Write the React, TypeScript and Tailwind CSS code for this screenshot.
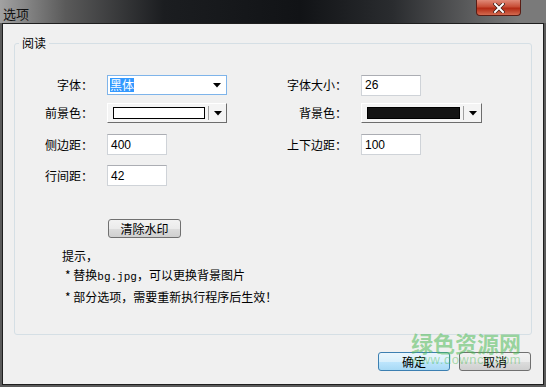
import React from 'react';

const font = "font-['SimSun','Noto_Sans_CJK_SC',sans-serif]";

function Caret() {
    return (
        <svg width="8" height="5" viewBox="0 0 8 5" className="block">
            <path d="M0 0h8L4 4.5z" fill="#000" />
        </svg>
    );
}

function TextBox({ value }: { value: string }) {
    return (
        <div className="w-[60px] h-[21px] bg-white border border-[#cfd3d8] border-t-[#abadb3] px-[3px] flex items-center text-[12px] font-['Liberation_Sans',sans-serif] text-black">
            {value}
        </div>
    );
}

function ColorCombo({ color, width }: { color: string; width: string }) {
    return (
        <div className={`${width} h-[20px] bg-[#f4f4f4] border border-[#fff] border-r-[#6d6d6d] border-b-[#6d6d6d] flex items-center pl-[5px]`}>
            <div className="flex-1 h-[12px] border border-black" style={{ background: color }} />
            <div className="ml-[3px] w-px h-[14px] bg-[#a0a0a0]" />
            <div className="w-[17px] flex justify-center">
                <Caret />
            </div>
        </div>
    );
}

function Label({ text, w }: { text: string; w: string }) {
    return <div className={`${w} flex justify-end whitespace-nowrap text-[12px] pr-[14px]`}>{text}</div>;
}

export default function App() {
    return (
        <div className={`w-[546px] h-[387px] bg-[#5b5b5b] flex flex-col ${font} text-black overflow-hidden`}>
            <div className="h-[23px] flex items-start justify-between bg-[linear-gradient(90deg,#a2a2a2_0%,#5a5a5a_12%,#1b1d20_30%,#111316_55%,#2a2c2f_72%,#7a7a7a_95%)]">
                <div className="pl-[3px] pt-[4px] text-[13px] text-[#111]">选项</div>
                <div className="mr-[25px] w-[45px] h-[16px] rounded-b-[4px] border border-[#5a1d15] border-t-0 bg-[linear-gradient(180deg,#e08a78_0%,#c74d36_45%,#b32a14_55%,#d36a50_100%)] flex items-center justify-center">
                    <svg width="12" height="10" viewBox="0 0 12 10">
                        <path d="M2 1l8 8M10 1L2 9" stroke="#3a1a14" strokeWidth="3.4" strokeLinecap="square" />
                        <path d="M2 1l8 8M10 1L2 9" stroke="#fff" strokeWidth="2" strokeLinecap="square" />
                    </svg>
                </div>
            </div>
            <div className="flex-1 mx-[2px] mb-[2px] border border-[#1e1e1e] bg-[#f0f0f0] flex flex-col">
                <div className="relative mt-[19px] mx-[11px] h-[292px] border border-[#d5dfe5] rounded-[3px]">
                    <div className="absolute -top-[9px] left-[4px] px-[3px] bg-[#f0f0f0] text-[12px] leading-[16px]">阅读</div>
                    <div className="flex pt-[31px]">
                        <div className="flex flex-col gap-[11px] w-[276px]">
                            <div className="flex items-center h-[20px]">
                                <Label text="字体：" w="w-[92px]" />
                                <div className="w-[120px] h-[20px] bg-white border border-[#7eb4ea] flex items-center justify-between pl-[2px] pr-[5px]">
                                    <span className="bg-[#3399ff] text-white text-[12px] leading-[14px]">黑体</span>
                                    <Caret />
                                </div>
                            </div>
                            <div className="flex items-center h-[20px] -mt-[3px]">
                                <Label text="前景色：" w="w-[92px]" />
                                <ColorCombo color="#ffffff" width="w-[120px]" />
                            </div>
                            <div className="flex items-center h-[21px]">
                                <Label text="侧边距：" w="w-[92px]" />
                                <TextBox value="400" />
                            </div>
                            <div className="flex items-center h-[21px] -mt-[1px]">
                                <Label text="行间距：" w="w-[92px]" />
                                <TextBox value="42" />
                            </div>
                        </div>
                        <div className="flex flex-col gap-[11px]">
                            <div className="flex items-center h-[20px]">
                                <Label text="字体大小：" w="w-[70px]" />
                                <TextBox value="26" />
                            </div>
                            <div className="flex items-center h-[20px] -mt-[3px]">
                                <Label text="背景色：" w="w-[70px]" />
                                <ColorCombo color="#141414" width="w-[121px]" />
                            </div>
                            <div className="flex items-center h-[21px]">
                                <Label text="上下边距：" w="w-[70px]" />
                                <TextBox value="100" />
                            </div>
                        </div>
                    </div>
                    <div className="ml-[93px] mt-[33px] w-[73px] h-[19px] rounded-[3px] border border-[#707070] bg-[linear-gradient(180deg,#f2f2f2_0%,#ebebeb_50%,#dddddd_51%,#cfcfcf_100%)] flex items-center justify-center text-[12px]">
                        清除水印
                    </div>
                    <div className="ml-[47px] mt-[8px] text-[12px] leading-[19px]">
                        <div>提示，</div>
                        <div className="pl-[3px]">* 替换<span className="font-['Liberation_Mono',monospace] text-[11px]">bg.jpg</span>，可以更换背景图片</div>
                        <div className="pl-[3px]">* 部分选项，需要重新执行程序后生效！</div>
                    </div>
                </div>
                <div className="relative flex justify-end gap-[9px] mt-[17px] mr-[12px]">
                    <div className="w-[72px] h-[19px] rounded-[3px] border border-[#3c7fb1] bg-[linear-gradient(180deg,#eaf6fd_0%,#d9f0fc_50%,#bee6fd_51%,#a7d9f5_100%)] flex items-center justify-center text-[12px]">
                        确定
                    </div>
                    <div className="w-[72px] h-[19px] rounded-[3px] border border-[#707070] bg-[linear-gradient(180deg,#f2f2f2_0%,#ebebeb_50%,#dddddd_51%,#cfcfcf_100%)] flex items-center justify-center text-[12px]">
                        取消
                    </div>
                    <div className="absolute right-[9px] -top-[22px] w-[112px] flex flex-col items-center pointer-events-none">
                        <div className="text-[22px] leading-[24px] font-bold text-[#4cbb55]/55 font-['Noto_Sans_CJK_SC',sans-serif]">绿色资源网</div>
                        <div className="text-[13px] leading-[12px] text-[#4cbb55]/45 font-['Liberation_Sans',sans-serif] tracking-[0.5px]">www.downcc.com</div>
                    </div>
                </div>
            </div>
        </div>
    );
}
